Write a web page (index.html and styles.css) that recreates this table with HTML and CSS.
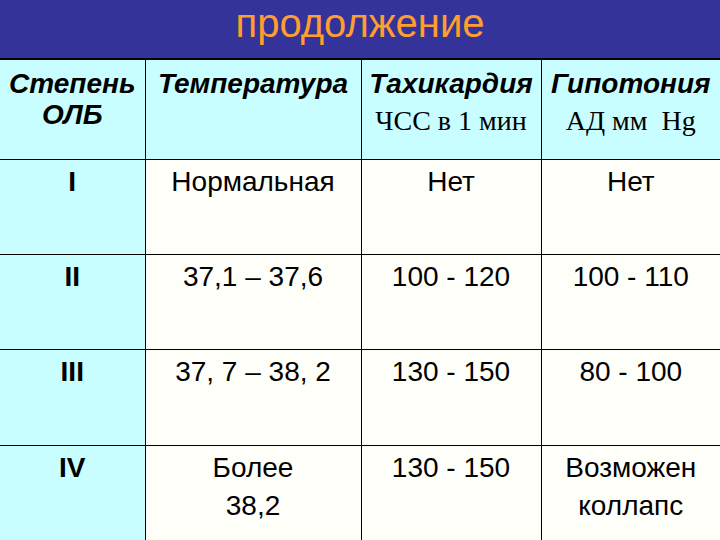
FILE: index.html
```html
<!DOCTYPE html>
<html lang="ru">
<head>
<meta charset="utf-8">
<title>продолжение</title>
<link rel="stylesheet" href="styles.css">
</head>
<body>
<div class="title">продолжение</div>
<table class="grid">
  <colgroup>
    <col class="c1"><col class="c2"><col class="c3"><col class="c4">
  </colgroup>
  <thead>
    <tr>
      <th><span class="hl">Степень</span><span class="hl">ОЛБ</span></th>
      <th><span class="hl">Температура</span></th>
      <th><span class="hl">Тахикардия</span><span class="sub">ЧСС в 1 мин</span></th>
      <th><span class="hl">Гипотония</span><span class="sub">АД мм&nbsp; Hg</span></th>
    </tr>
  </thead>
  <tbody>
    <tr class="r1">
      <td class="deg">I</td><td>Нормальная</td><td>Нет</td><td>Нет</td>
    </tr>
    <tr class="r2">
      <td class="deg">II</td><td>37,1 – 37,6</td><td>100 - 120</td><td>100 - 110</td>
    </tr>
    <tr class="r3">
      <td class="deg">III</td><td>37, 7 – 38, 2</td><td>130 - 150</td><td>80 - 100</td>
    </tr>
    <tr class="r4">
      <td class="deg">IV</td><td>Более<br>38,2</td><td>130 - 150</td><td>Возможен<br>коллапс</td>
    </tr>
  </tbody>
</table>
</body>
</html>
```
FILE: styles.css
```css
html, body {
  margin: 0;
  padding: 0;
  background: #fffffa;
  width: 720px;
  height: 540px;
  overflow: hidden;
}

body {
  font-family: "Liberation Sans", Arial, sans-serif;
  color: #000;
}

.title {
  height: 58px;
  box-sizing: border-box;
  padding-top: 3px;
  background: #333399;
  color: #ff9d2e;
  font-size: 40px;
  line-height: 40px;
  text-align: center;
}

.grid {
  width: 720px;
  table-layout: fixed;
  border-collapse: collapse;
  border-top: 2px solid #000;
}

.c1 { width: 145px; }
.c2 { width: 216px; }
.c3 { width: 180px; }
.c4 { width: 179px; }

.grid th,
.grid td {
  border: 1px solid #000;
  text-align: center;
  vertical-align: top;
  padding: 0;
}

.grid th:first-child,
.grid td:first-child { border-left: none; }
.grid th:last-child,
.grid td:last-child { border-right: none; }

.grid thead tr { height: 100px; }

.grid th {
  background: #c8feff;
  font-weight: bold;
  font-style: italic;
  font-size: 28px;
  line-height: 31px;
  padding-top: 8px;
}

.hl { display: block; }

.sub {
  display: block;
  margin-top: 6px;
  font-family: "Liberation Serif", "Times New Roman", serif;
  font-weight: normal;
  font-style: normal;
  font-size: 28px;
  line-height: 31px;
}

.grid td {
  font-size: 28px;
  line-height: 38px;
  padding-top: 3px;
  background: #fffffa;
}

.grid td.deg {
  background: #c8feff;
  font-weight: bold;
}

.r1, .r2, .r4 { height: 95px; }
.r3 { height: 96px; }
```
